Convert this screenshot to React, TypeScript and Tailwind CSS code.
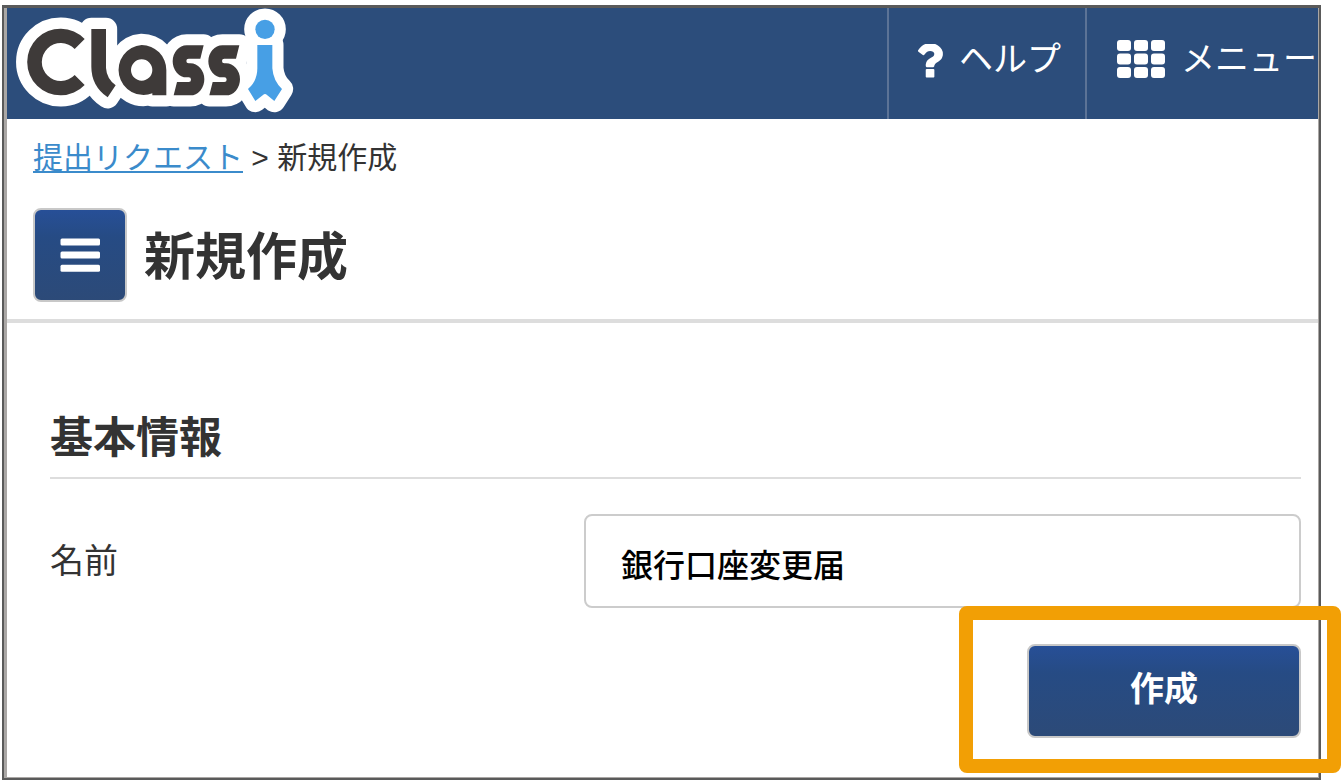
import React from "react";

function LogoLetters() {
  const s =
    "M611 136L601 176H566A7 7 0 0 0 566 190H571A42 48 0 0 1 571 286H521L531 246H566A7 7 0 0 0 566 232H560A42 48 0 0 1 560 136Z";
  return (
    <>
      <path d="M254 117A100 100 0 1 0 254 255L224 225A57 57 0 1 1 224 147Z" />
      <path d="M274 87H318V204Q320 236 347 256L323 292Q274 258 274 200Z" />
      <path
        fillRule="evenodd"
        d="M425 135A74 75 0 0 1 499 210V286H457V280A75 75 0 1 1 425 135ZM425 178A32 32 0 1 0 425 242A32 32 0 1 0 425 178Z"
      />
      <path d={s} />
      <path d={s} transform="translate(107 0)" />
    </>
  );
}

function LogoFigure() {
  return (
    <>
      <circle cx="795" cy="88" r="29" />
      <path d="M772 135H817V205Q820 243 846 267L823 303L801 285Q795 279 789 285L766 303L744 267Q772 243 772 205Z" />
    </>
  );
}

function Logo() {
  return (
    <svg viewBox="21 24 870 333" className="h-[111px] w-[290px]" role="img" aria-label="Classi">
      <circle cx="185" cy="186" r="100" fill="#fff" />
      <circle cx="425" cy="210" r="60" fill="#fff" />
      <g fill="#fff" stroke="#fff" strokeWidth="67" strokeLinejoin="round">
        <LogoLetters />
        <LogoFigure />
      </g>
      <g fill="#3e3a39">
        <LogoLetters />
      </g>
      <g fill="#479fe5">
        <LogoFigure />
      </g>
    </svg>
  );
}

function QuestionIcon() {
  return (
    <svg viewBox="60 256 964 1232" className="h-[34px] w-[26px]" fill="currentColor" aria-hidden="true">
      <path d="M704 1208v240q0 16-12 28t-28 12h-240q-16 0-28-12t-12-28v-240q0-16 12-28t28-12h240q16 0 28 12t12 28zm316-600q0 54-15.5 101t-35 76.5-55 59.5-57.5 43.5-61 35.5q-41 23-68.5 65t-27.5 67q0 17-12 32.5t-28 15.5h-240q-15 0-25.5-18.5t-10.5-37.5v-45q0-83 65-156.5t143-108.5q59-27 84-56t25-76q0-42-46.5-74t-107.5-32q-65 0-108 29-35 25-107 115-13 16-31 16-12 0-25-8l-164-125q-13-10-15.5-25t5.5-28q160-266 464-266 80 0 161 31t146 83 106 127.5 41 158.5z" />
    </svg>
  );
}

function GridIcon() {
  return (
    <svg viewBox="0 0 48 38" className="h-[38px] w-12" fill="currentColor" aria-hidden="true">
      {[0, 13.5, 27].map((y) =>
        [0, 17, 34].map((x) => <rect key={`${x}-${y}`} x={x} y={y} width="14" height="11" rx="3" />)
      )}
    </svg>
  );
}

function BarsIcon() {
  return (
    <svg viewBox="0 0 40 34" className="h-[34px] w-10" fill="currentColor" aria-hidden="true">
      <rect x="0.5" y="0.5" width="39.5" height="7" rx="1.5" />
      <rect x="0.5" y="13.5" width="39.5" height="7" rx="1.5" />
      <rect x="0.5" y="26.8" width="39.5" height="7" rx="1.5" />
    </svg>
  );
}

export default function App() {
  return (
    <div className="flex min-h-screen flex-col bg-white pt-[5px] pr-[21px] pb-[3px] pl-[2px] font-['Liberation_Sans','Noto_Sans_CJK_JP',sans-serif] text-[#333]">
      <div className="flex grow flex-col border-2 border-t-3 border-[#5a5a5a]">
        <div className="grow border-r border-b border-l-3 border-[#aaa7a5]">
          <header className="flex h-[111px] justify-between bg-[#2c4d7b] text-[34px] leading-[50px] text-white">
            <a href="#home">
              <Logo />
            </a>
            <nav className="flex">
              <a href="#help" className="flex items-start gap-4 border-l-2 border-[#5c7396] pt-[26px] pr-6 pl-7">
                <span className="pt-[10px]">
                  <QuestionIcon />
                </span>
                ヘルプ
              </a>
              <a href="#menu" className="flex items-start gap-4 border-l-2 border-[#5c7396] pt-[26px] pr-px pl-[30px]">
                <span className="pt-[6px]">
                  <GridIcon />
                </span>
                メニュー
              </a>
            </nav>
          </header>

          <div className="border-b-4 border-[#ddd] px-[26px] pt-4 pb-[17px]">
            <nav className="text-[30px] leading-[45px]">
              <a href="#requests" className="text-[#3b8bcb] underline decoration-2 underline-offset-3">
                提出リクエスト
              </a>
              {" > "}新規作成
            </nav>
            <div className="mt-7 flex items-center gap-[17px]">
              <button
                type="button"
                aria-label="メニューを開く"
                className="flex size-[94px] items-center justify-center rounded-lg border-2 border-[#c8c8c8] bg-linear-to-b from-[#274f97] via-[#264b84] via-30% to-[#2c4a78] text-white"
              >
                <BarsIcon />
              </button>
              <h1 className="pt-1.5 text-[51px] leading-[76px] font-bold">新規作成</h1>
            </div>
          </div>

          <main className="pt-[83px] pr-[17px] pb-[38px] pl-[43px]">
            <h2 className="border-b-2 border-[#ddd] pb-[7px] text-[43px] leading-[64px] font-bold">基本情報</h2>
            <form className="mt-[35px]" onSubmit={(e) => e.preventDefault()}>
              <div className="flex items-center">
                <label htmlFor="name" className="w-[534px] shrink-0 text-[34px] leading-[50px]">
                  名前
                </label>
                <input
                  id="name"
                  defaultValue="銀行口座変更届"
                  className="h-[94px] min-w-0 grow rounded-lg border-2 border-[#ccc] bg-white pt-1 pl-[35px] text-[32px] font-medium text-black"
                />
              </div>
              <div className="mt-9 flex justify-end">
                <div className="relative">
                  <button
                    type="submit"
                    className="h-[94px] w-[274px] rounded-lg border-2 border-[#c8c8c8] bg-linear-to-b from-[#274f97] via-[#264b84] via-30% to-[#2c4a78] pb-1 text-[34px] font-bold text-white"
                  >
                    作成
                  </button>
                  <div className="pointer-events-none absolute -top-[38px] -right-10 -bottom-[35px] -left-[68px] rounded-lg border-14 border-[#f29f05]" />
                </div>
              </div>
            </form>
          </main>
        </div>
      </div>
    </div>
  );
}
